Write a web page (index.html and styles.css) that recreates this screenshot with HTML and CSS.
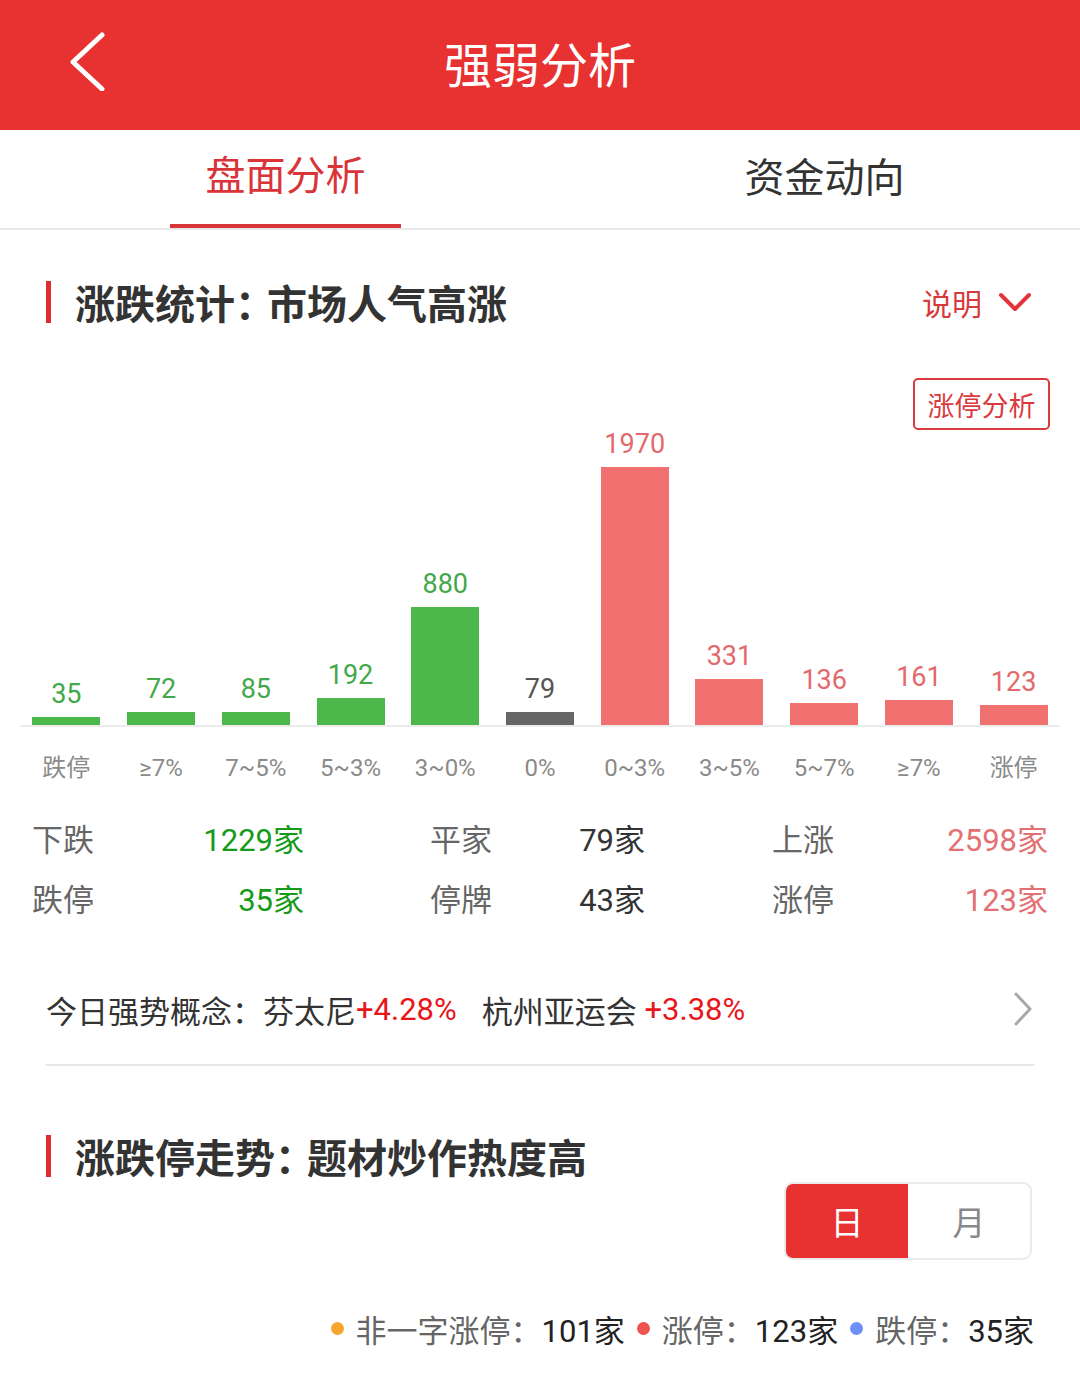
FILE: index.html
```html
<!DOCTYPE html>
<html lang="zh-CN">
<head>
<meta charset="utf-8">
<title>强弱分析</title>
<link rel="stylesheet" href="styles.css">
</head>
<body>
<header class="topbar">
  <svg class="back" width="40" height="60" viewBox="0 0 40 60"><polyline points="34,4 5,31 34,58" fill="none" stroke="#fff" stroke-width="5" stroke-linecap="round" stroke-linejoin="round"/></svg>
  <h1 class="title">强弱分析</h1>
</header>
<nav class="tabs">
  <div class="tab active">盘面分析</div>
  <div class="tab second">资金动向</div>
</nav>

<section class="sec-head">
  <div class="sec-title"><span class="mark"></span>涨跌统计<span class="colon">：</span>市场人气高涨</div>
  <div class="explain">说明<svg width="34" height="24" viewBox="0 0 34 24"><polyline points="3,5 17,19 31,5" fill="none" stroke="#e0353a" stroke-width="4" stroke-linecap="round" stroke-linejoin="round"/></svg></div>
</section>

<div class="btn-row"><div class="zt-btn">涨停分析</div></div>

<div class="chart">
  <div class="col g"><span class="val">35</span><span class="bar" style="height:8px"></span></div>
  <div class="col g"><span class="val">72</span><span class="bar" style="height:13px"></span></div>
  <div class="col g"><span class="val">85</span><span class="bar" style="height:13px"></span></div>
  <div class="col g"><span class="val">192</span><span class="bar" style="height:27px"></span></div>
  <div class="col g"><span class="val">880</span><span class="bar" style="height:118px"></span></div>
  <div class="col n"><span class="val">79</span><span class="bar" style="height:13px"></span></div>
  <div class="col r"><span class="val">1970</span><span class="bar" style="height:258px"></span></div>
  <div class="col r"><span class="val">331</span><span class="bar" style="height:46px"></span></div>
  <div class="col r"><span class="val">136</span><span class="bar" style="height:22px"></span></div>
  <div class="col r"><span class="val">161</span><span class="bar" style="height:25px"></span></div>
  <div class="col r"><span class="val">123</span><span class="bar" style="height:20px"></span></div>
</div>
<div class="axis"></div>
<div class="xlabels">
  <span>跌停</span><span>≥7%</span><span>7~5%</span><span>5~3%</span><span>3~0%</span><span>0%</span><span>0~3%</span><span>3~5%</span><span>5~7%</span><span>≥7%</span><span>涨停</span>
</div>

<div class="stats">
  <div class="srow">
    <div class="grp g1"><span class="lbl">下跌</span><span class="num green">1229家</span></div>
    <div class="grp g2"><span class="lbl">平家</span><span class="num dark">79家</span></div>
    <div class="grp g3"><span class="lbl">上涨</span><span class="num red">2598家</span></div>
  </div>
  <div class="srow">
    <div class="grp g1"><span class="lbl">跌停</span><span class="num green">35家</span></div>
    <div class="grp g2"><span class="lbl">停牌</span><span class="num dark">43家</span></div>
    <div class="grp g3"><span class="lbl">涨停</span><span class="num red">123家</span></div>
  </div>
</div>

<div class="concept">
  <div class="concept-text">今日强势概念：芬太尼<span class="pct">+4.28%</span><span class="gap"></span>杭州亚运会 <span class="pct">+3.38%</span></div>
  <svg class="chev" width="22" height="36" viewBox="0 0 22 36"><polyline points="4,3 18,18 4,33" fill="none" stroke="#a8a8a8" stroke-width="3" stroke-linecap="round" stroke-linejoin="round"/></svg>
</div>

<section class="sec-head sec2">
  <div class="sec-title"><span class="mark"></span>涨跌停走势<span class="colon">：</span>题材炒作热度高</div>
</section>

<div class="toggle-row">
  <div class="toggle"><span class="t on">日</span><span class="t">月</span></div>
</div>

<div class="legend">
  <span class="dot orange"></span><span class="lg">非一字涨停：</span><span class="lv">101家</span>
  <span class="dot red"></span><span class="lg">涨停：</span><span class="lv">123家</span>
  <span class="dot blue"></span><span class="lg">跌停：</span><span class="lv">35家</span>
</div>
</body>
</html>
```
FILE: styles.css
```css
* { box-sizing: border-box; }
html, body { margin: 0; padding: 0; background: #fff; }
body {
  width: 1080px;
  font-family: Roboto, "Noto Sans CJK SC", sans-serif;
  color: #333;
  overflow: hidden;
}

.topbar {
  height: 130px;
  background: #e83131;
  display: flex;
  align-items: center;
  justify-content: center;
  position: relative;
}
.back { position: absolute; left: 68px; top: 31px; }
.title {
  margin: 0 0 6px;
  font-size: 48px;
  font-weight: 400;
  color: #fff;
}

.tabs {
  height: 100px;
  display: flex;
  border-bottom: 2px solid #e8e8e8;
}
.tab {
  width: 231px;
  height: 98px;
  display: flex;
  align-items: center;
  justify-content: center;
  font-size: 40px;
  color: #333;
  padding-bottom: 8px;
}
.tab.active {
  margin-left: 170px;
  color: #d93438;
  border-bottom: 4px solid #d93438;
}
.tab.second { margin-left: 308px; }

.sec-head {
  margin-top: 50px;
  height: 44px;
  display: flex;
  align-items: center;
  justify-content: space-between;
  padding: 0 48px 0 46px;
}
.sec-title {
  display: flex;
  align-items: center;
  font-size: 40px;
  font-weight: 700;
  color: #333;
}
.colon { letter-spacing: -8px; }
.mark {
  width: 5px;
  height: 42px;
  background: #e02b30;
  margin-right: 24px;
}
.explain {
  display: flex;
  align-items: center;
  gap: 16px;
  font-size: 30px;
  color: #d8393b;
}

.btn-row {
  margin-top: 54px;
  height: 52px;
  display: flex;
  justify-content: flex-end;
  padding-right: 30px;
}
.zt-btn {
  width: 137px;
  height: 52px;
  border: 2px solid #d93a3e;
  border-radius: 5px;
  color: #d93a3e;
  font-size: 27px;
  display: flex;
  align-items: center;
  justify-content: center;
}

.chart {
  height: 295px;
  margin: 0 19px;
  display: grid;
  grid-template-columns: repeat(11, 1fr);
  align-items: end;
}
.col {
  display: flex;
  flex-direction: column;
  align-items: center;
  justify-content: flex-end;
}
.val {
  font-size: 27px;
  line-height: 27px;
  margin-bottom: 9px;
}
.bar { width: 68px; display: block; }
.col.g .val { color: #43a84a; }
.col.g .bar { background: #4cb84b; }
.col.r .val { color: #e36a6c; }
.col.r .bar { background: #f07170; }
.col.n .val { color: #555; }
.col.n .bar { background: #666; }

.axis {
  height: 2px;
  margin: 0 20px;
  background: #ececec;
}
.xlabels {
  margin: 26px 19px 0;
  display: grid;
  grid-template-columns: repeat(11, 1fr);
  text-align: center;
  font-size: 24px;
  line-height: 30px;
  color: #8a8a8a;
}

.stats {
  margin-top: 34px;
  padding-left: 32px;
  display: flex;
  flex-direction: column;
  gap: 20px;
}
.srow {
  display: flex;
  height: 40px;
  align-items: center;
  font-size: 31px;
}
.grp { display: flex; justify-content: space-between; }
.g1 { width: 272px; }
.g2 { width: 215px; margin-left: 126px; }
.g3 { width: 276px; margin-left: 127px; }
.lbl { color: #666; }
.green { color: #169a19; }
.dark { color: #333; }
.red { color: #e37072; }

.concept {
  margin: 73px 46px 0 46px;
  height: 76px;
  padding-bottom: 36px;
  border-bottom: 2px solid #e6e6e6;
  display: flex;
  align-items: center;
  justify-content: space-between;
}
.concept-text {
  font-size: 31px;
  color: #333;
  height: 40px;
  display: flex;
  align-items: center;
  white-space: pre;
}
.pct { color: #e8161a; }
.gap { display: inline-block; width: 25px; }

.sec2 { margin-top: 68px; }

.toggle-row {
  margin-top: 4px;
  display: flex;
  justify-content: flex-end;
  padding-right: 48px;
}
.toggle {
  width: 248px;
  height: 78px;
  border: 2px solid #ebebeb;
  border-radius: 9px;
  display: flex;
  overflow: hidden;
}
.t {
  flex: 1;
  display: flex;
  align-items: center;
  justify-content: center;
  font-size: 33px;
  color: #888;
}
.t.on { background: #e83131; color: #fff; }

.legend {
  margin-top: 48px;
  padding-right: 46px;
  display: flex;
  justify-content: flex-end;
  align-items: center;
  font-size: 31px;
  height: 40px;
}
.dot {
  width: 13px;
  height: 13px;
  border-radius: 50%;
  margin: 0 12px 0 12px;
}
.orange { background: #f6a62d; }
.red.dot { background: #ee5350; }
.blue { background: #6e8ff5; }
.lg { color: #666; }
.lv { color: #222; }
```
